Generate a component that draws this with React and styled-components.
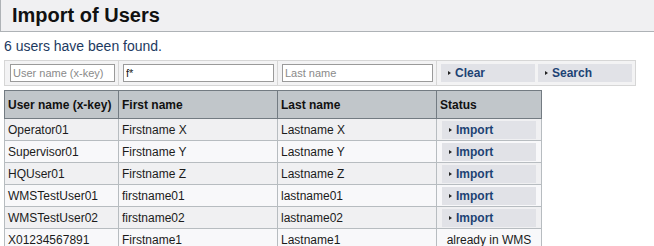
import React from "react";
import styled, { createGlobalStyle } from "styled-components";

const Global = createGlobalStyle`
  html, body { margin: 0; padding: 0; background: #ffffff; }
  body { font-family: "Liberation Sans", Arial, sans-serif; color: #1b1b1b; }
  * { box-sizing: border-box; }
`;

const Page = styled.div`
  width: 654px;
  height: 246px;
  overflow: hidden;
`;

const Header = styled.div`
  height: 32px;
  background: #f0f0f2;
  border-left: 1px solid #aeb2b6;
  border-bottom: 1px solid #aeb2b6;
  padding-left: 11px;
`;

const Title = styled.h1`
  margin: 0;
  font-size: 20px;
  font-weight: bold;
  line-height: 30px;
  color: #111;
`;

const Content = styled.div`
  padding: 0 4px;
`;

const Found = styled.p`
  margin: 6px 0 0;
  font-size: 14px;
  line-height: 16px;
  color: #1d3a5f;
  height: 22px;
`;

const FilterBar = styled.div`
  display: flex;
  width: 632px;
  height: 26px;
  border: 1px solid #d6d6d6;
  background: #f3f3f4;
`;

const FilterCell = styled.div`
  display: flex;
  align-items: center;
  gap: 3px;
  width: ${(p) => p.$w}px;
  padding-left: ${(p) => p.$pl}px;
  border-left: ${(p) => (p.$first ? "none" : "1px solid #d6d6d6")};
`;

const Input = styled.input`
  width: ${(p) => p.$w}px;
  height: 18px;
  margin: 0;
  padding: 0 2px;
  border: 1px solid #9a9a9a;
  background: #fff;
  font-family: "Liberation Sans", Arial, sans-serif;
  font-size: 11px;
  color: #1b1b1b;
  outline: none;
  &::placeholder { color: #8a8a8a; opacity: 1; }
`;

const ActionButton = styled.button`
  display: flex;
  align-items: center;
  width: 94px;
  height: 18px;
  margin: 0;
  padding: 0 0 0 7px;
  border: none;
  background: #e1e2e7;
  font-family: "Liberation Sans", Arial, sans-serif;
  font-size: 12px;
  font-weight: bold;
  color: #1d4274;
  cursor: pointer;
`;

const Arrow = styled.span`
  display: inline-block;
  width: 0;
  height: 0;
  border-top: 2.5px solid transparent;
  border-bottom: 2.5px solid transparent;
  border-left: 3px solid #222;
  margin-right: 4px;
`;

const Table = styled.table`
  margin-top: 4px;
  border-collapse: collapse;
  table-layout: fixed;
  width: 538px;
  font-size: 12px;
`;

const Th = styled.th`
  height: 28px;
  padding: 0 3px;
  text-align: left;
  font-weight: bold;
  color: #111;
  background: #c1c6ca;
  border: 1px solid #737b82;
`;

const Tr = styled.tr`
  background: ${(p) => (p.$odd ? "#f0f0f2" : "#f8f8fa")};
`;

const Td = styled.td`
  height: 22px;
  padding: 0 3px;
  border: 1px solid #b7bcc0;
  color: #1b1b1b;
  white-space: nowrap;
  text-align: ${(p) => (p.$center ? "center" : "left")};
`;

const StatusTd = styled(Td)`
  padding: 0 0 0 5px;
`;

const Btn = ({ children }) => (
  <ActionButton>
    <Arrow />
    {children}
  </ActionButton>
);

const users = [
  ["Operator01", "Firstname X", "Lastname X", false],
  ["Supervisor01", "Firstname Y", "Lastname Y", false],
  ["HQUser01", "Firstname Z", "Lastname Z", false],
  ["WMSTestUser01", "firstname01", "lastname01", false],
  ["WMSTestUser02", "firstname02", "lastname02", false],
  ["X01234567891", "Firstname1", "Lastname1", true],
];

export default function App() {
  return (
    <Page>
      <Global />
      <Header>
        <Title>Import of Users</Title>
      </Header>
      <Content>
        <Found>6 users have been found.</Found>
        <FilterBar>
          <FilterCell $first $w={113} $pl={5}>
            <Input $w={105} placeholder="User name (x-key)" />
          </FilterCell>
          <FilterCell $w={159} $pl={4}>
            <Input $w={151} defaultValue="f*" />
          </FilterCell>
          <FilterCell $w={159} $pl={4}>
            <Input $w={151} placeholder="Last name" />
          </FilterCell>
          <FilterCell $w={199} $pl={4}>
            <Btn>Clear</Btn>
            <Btn>Search</Btn>
          </FilterCell>
        </FilterBar>
        <Table>
          <colgroup>
            <col style={{ width: 114 }} />
            <col style={{ width: 159 }} />
            <col style={{ width: 159 }} />
            <col style={{ width: 105 }} />
          </colgroup>
          <thead>
            <tr>
              <Th>User name (x-key)</Th>
              <Th>First name</Th>
              <Th>Last name</Th>
              <Th>Status</Th>
            </tr>
          </thead>
          <tbody>
            {users.map(([u, f, l, done], i) => (
              <Tr key={u} $odd={i % 2 === 0}>
                <Td>{u}</Td>
                <Td>{f}</Td>
                <Td>{l}</Td>
                {done ? (
                  <Td $center>already in WMS</Td>
                ) : (
                  <StatusTd>
                    <Btn>Import</Btn>
                  </StatusTd>
                )}
              </Tr>
            ))}
          </tbody>
        </Table>
      </Content>
    </Page>
  );
}
